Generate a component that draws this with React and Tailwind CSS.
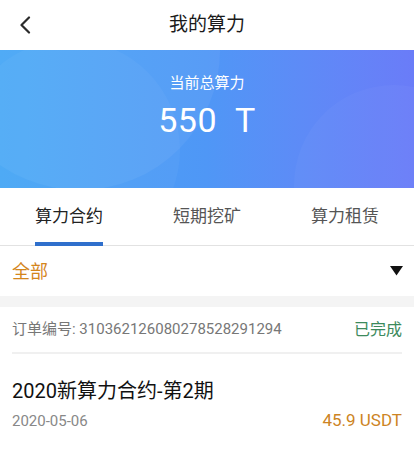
import React, { useState } from 'react';

function App() {
  const [activeTab, setActiveTab] = useState(0);
  const tabs = ['算力合约', '短期挖矿', '算力租赁'];

  return (
    <div className="w-[414px] h-[456px] bg-white overflow-hidden font-['Roboto','Noto_Sans_CJK_SC',sans-serif]">
      {/* Header */}
      <div className="relative h-[50px] flex items-center justify-center">
        <button className="absolute left-[16px] top-[15px] w-[18px] h-[20px] flex items-center justify-center">
          <svg width="14" height="18" viewBox="0 0 14 18" fill="none">
            <path d="M11 1.5 L3.5 9 L11 16.5" stroke="#2b2b2b" strokeWidth="2.2" strokeLinecap="round" strokeLinejoin="round" />
          </svg>
        </button>
        <h1 className="text-[19px] text-[#1a1a1a]">我的算力</h1>
      </div>

      {/* Banner */}
      <div className="relative h-[138px] overflow-hidden bg-gradient-to-r from-[#47a7f5] via-[#4f97f6] to-[#6a7cf8]">
        <div className="absolute -left-[60px] -top-[140px] w-[280px] h-[280px] rounded-full bg-white/5" />
        <div className="absolute left-[-40px] top-[-10px] w-[220px] h-[220px] rounded-full bg-white/[0.04]" />
        <div className="absolute right-[-80px] top-[35px] w-[200px] h-[200px] rounded-full bg-white/[0.03]" />
        <div className="relative flex flex-col items-center pt-[22px] text-white">
          <div className="text-[15px] leading-[22px]">当前总算力</div>
          <div className="text-[34px] leading-[40px] mt-[6px] tracking-[0.5px]">550&nbsp;&nbsp;T</div>
        </div>
      </div>

      {/* Tabs */}
      <div className="flex h-[58px] border-b border-[#e2e2e2]">
        {tabs.map((t, i) => (
          <button
            key={t}
            onClick={() => setActiveTab(i)}
            className="flex-1 relative flex items-center justify-center"
          >
            <span className={`text-[17px] ${activeTab === i ? 'text-[#222]' : 'text-[#555]'}`}>{t}</span>
            {activeTab === i && (
              <span className="absolute bottom-[-1px] left-1/2 -translate-x-1/2 w-[68px] h-[4px] bg-[#2f6fcc]" />
            )}
          </button>
        ))}
      </div>

      {/* Filter */}
      <div className="h-[50px] flex items-center justify-between pl-[12px] pr-[11px]">
        <span className="text-[18px] text-[#d4861c]">全部</span>
        <svg width="13" height="10" viewBox="0 0 13 10">
          <path d="M0 0 H13 L6.5 9.5 Z" fill="#111" />
        </svg>
      </div>

      <div className="h-[11px] bg-[#f4f4f4]" />

      {/* Order card */}
      <div className="px-[12px]">
        <div className="h-[47px] flex items-center justify-between border-b-2 border-[#f0f0f0]">
          <span className="text-[15px] text-[#777]">订单编号: 310362126080278528291294</span>
          <span className="text-[16px] text-[#3c8a5c]">已完成</span>
        </div>
        <div className="pt-[24px]">
          <div className="text-[20px] leading-[26px] text-[#111]">2020新算力合约-第2期</div>
          <div className="flex items-center justify-between mt-[4px]">
            <span className="text-[15px] text-[#888]">2020-05-06</span>
            <span className="text-[17px] text-[#cd8424]">45.9 USDT</span>
          </div>
        </div>
      </div>
    </div>
  );
}

export default App;
